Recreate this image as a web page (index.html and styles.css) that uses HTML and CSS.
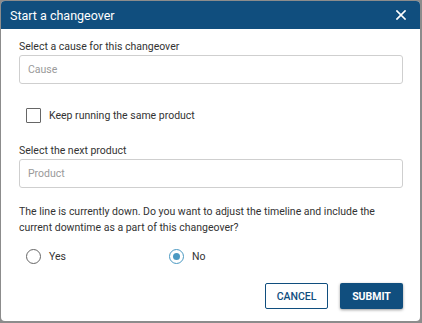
FILE: index.html
```html
<!DOCTYPE html>
<html lang="en">
<head>
    <meta charset="UTF-8">
    <title>Start a changeover</title>
    <link rel="stylesheet" href="styles.css">
</head>
<body>
<div class="dialog">
    <div class="dialog-header">
        <span class="dialog-title">Start a changeover</span>
        <span class="close">
            <svg width="10" height="10" viewBox="0 0 10 10"><path d="M1 1L9 9M9 1L1 9" stroke="#fff" stroke-width="1.7" stroke-linecap="square"/></svg>
        </span>
    </div>
    <div class="dialog-body">
        <label class="field-label">Select a cause for this changeover</label>
        <div class="input">Cause</div>

        <div class="check-row">
            <span class="checkbox"></span>
            <span>Keep running the same product</span>
        </div>

        <label class="field-label">Select the next product</label>
        <div class="input">Product</div>

        <p class="question">The line is currently down. Do you want to adjust the timeline and include the current downtime as a part of this changeover?</p>

        <div class="radios">
            <div class="radio-item"><span class="radio"></span><span>Yes</span></div>
            <div class="radio-item"><span class="radio checked"></span><span>No</span></div>
        </div>

        <div class="actions">
            <button class="btn btn-outline">CANCEL</button>
            <button class="btn btn-primary">SUBMIT</button>
        </div>
    </div>
</div>
</body>
</html>
```

FILE: styles.css
```css
body { margin: 0; background: #8c8c8c; font-family: Roboto, "Liberation Sans", sans-serif; color: #333; }
.dialog { margin: 1px 2px 2px 1px; height: 320px; background: #fff; border-radius: 4px; overflow: hidden; }
.dialog-header { height: 28px; background: #104e7e; color: #fff; display: flex; align-items: center; justify-content: space-between; padding: 0 14px 0 9px; }
.dialog-title { font-size: 12.5px; }
.close { display: flex; }
.dialog-body { padding: 11px 17px 0 18px; font-size: 10.5px; }
.field-label { display: block; line-height: 14px; margin-bottom: 1px; }
.input { height: 27px; border: 1px solid #cfcfcf; border-radius: 3px; padding: 0 8px; display: flex; align-items: center; color: #9a9a9a; }
.input + .check-row { margin-top: 24px; }
.check-row { display: flex; align-items: center; gap: 8px; margin: 0 0 21px 7px; }
.checkbox { width: 13px; height: 13px; border: 1px solid #666; border-radius: 1px; }
.question { margin: 16px 0 0; line-height: 16px; }
.radios { display: flex; margin: 13px 0 0 7px; }
.radio-item { display: flex; align-items: center; gap: 8px; width: 143px; }
.radio { width: 13px; height: 13px; border: 1px solid #666; border-radius: 50%; position: relative; }
.radio.checked { border-color: #4b99c2; }
.radio.checked::after { content: ""; position: absolute; left: 3px; top: 3px; width: 7px; height: 7px; border-radius: 50%; background: #4b99c2; }
.actions { display: flex; justify-content: flex-end; gap: 12px; margin-top: 19px; }
.btn { font-family: Roboto, "Liberation Sans", sans-serif; font-size: 10.5px; font-weight: 500; height: 26px; border-radius: 2px; padding: 0; }
.btn-outline { width: 63px; background: #fff; color: #104e7e; border: 1px solid #104e7e; }
.btn-primary { width: 63px; background: #104e7e; color: #fff; border: none; font-weight: 700; box-shadow: 0 1px 3px rgba(0,0,0,0.4); }
```
